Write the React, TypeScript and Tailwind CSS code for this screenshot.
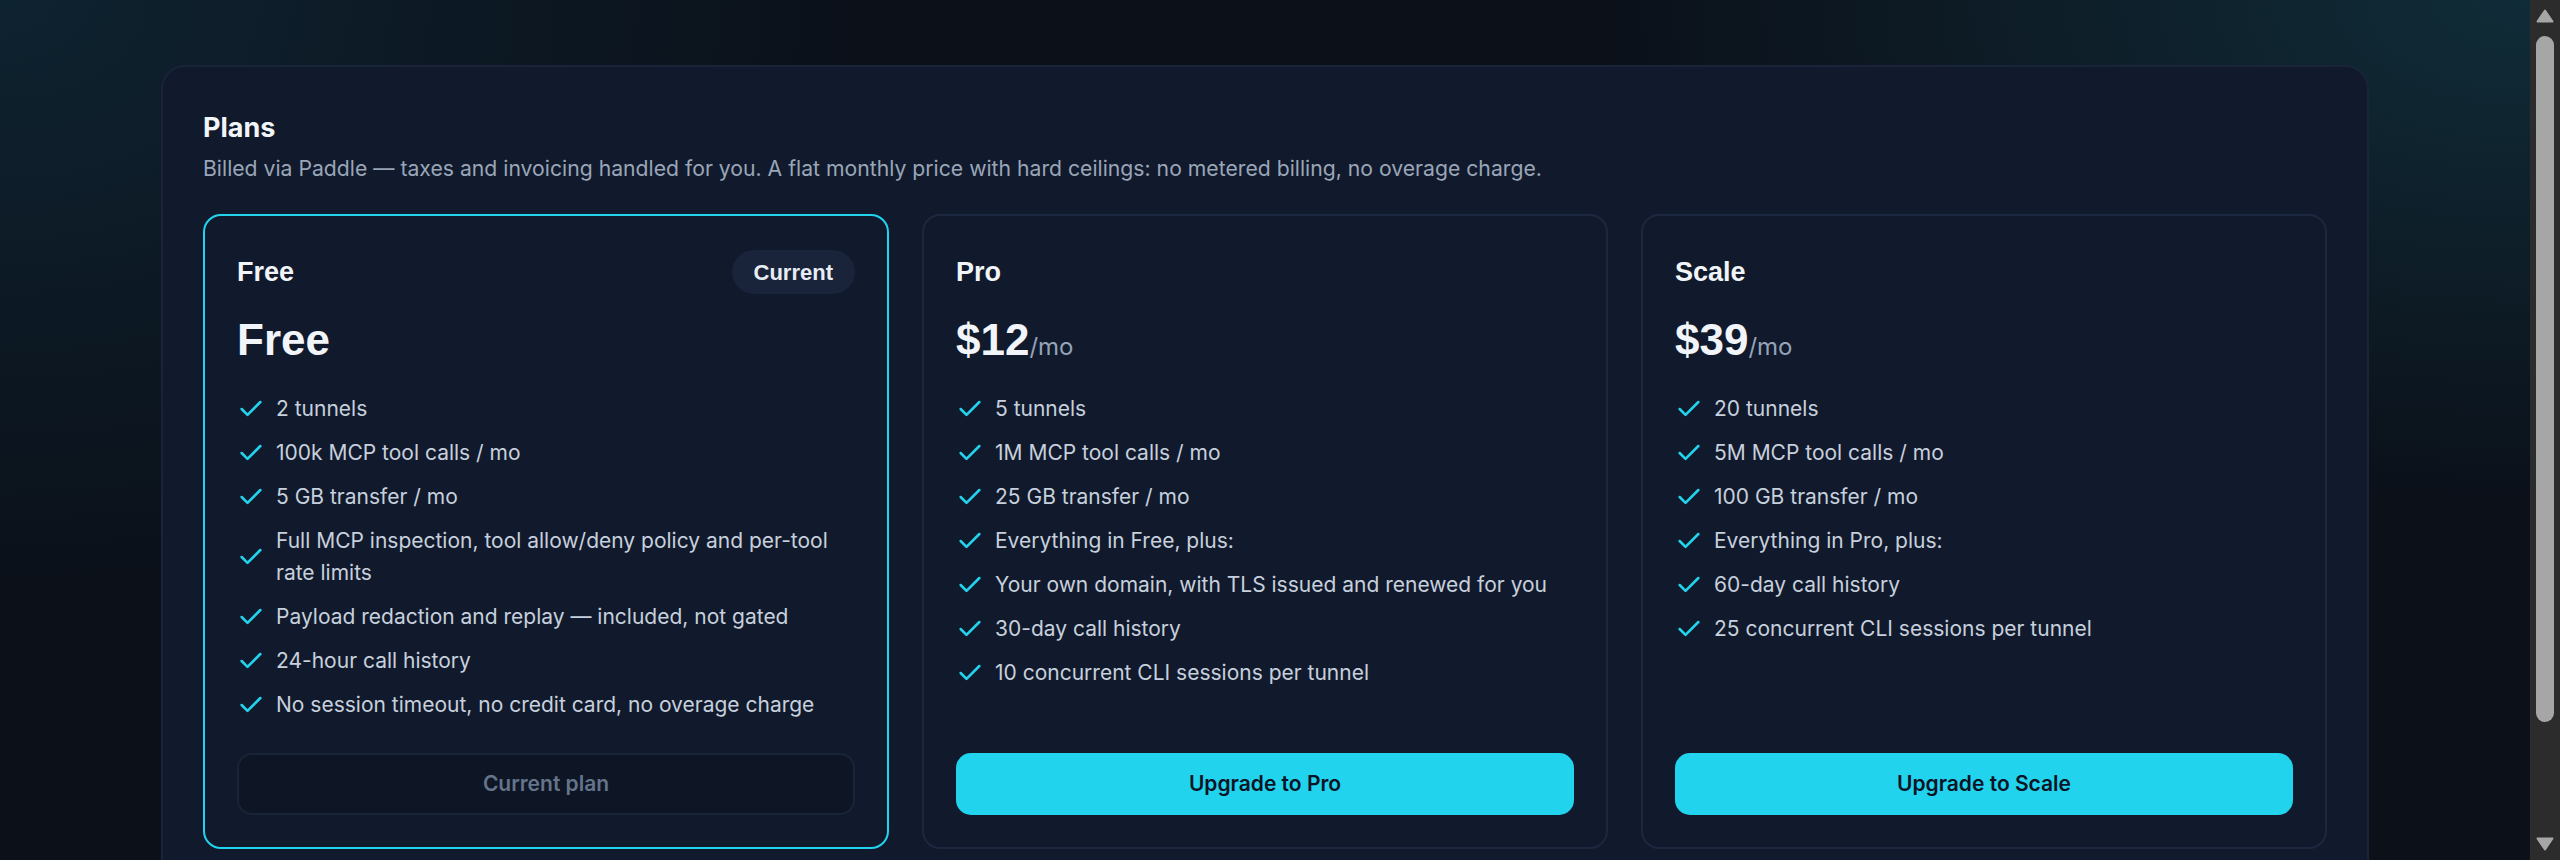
import { Check } from "lucide-react";

type Plan = {
  name: string;
  price: string;
  period?: string;
  features: string[];
  current?: boolean;
  cta: string;
};

const plans: Plan[] = [
  {
    name: "Free",
    price: "Free",
    current: true,
    cta: "Current plan",
    features: [
      "2 tunnels",
      "100k MCP tool calls / mo",
      "5 GB transfer / mo",
      "Full MCP inspection, tool allow/deny policy and per-tool rate limits",
      "Payload redaction and replay — included, not gated",
      "24-hour call history",
      "No session timeout, no credit card, no overage charge",
    ],
  },
  {
    name: "Pro",
    price: "$12",
    period: "/mo",
    cta: "Upgrade to Pro",
    features: [
      "5 tunnels",
      "1M MCP tool calls / mo",
      "25 GB transfer / mo",
      "Everything in Free, plus:",
      "Your own domain, with TLS issued and renewed for you",
      "30-day call history",
      "10 concurrent CLI sessions per tunnel",
    ],
  },
  {
    name: "Scale",
    price: "$39",
    period: "/mo",
    cta: "Upgrade to Scale",
    features: [
      "20 tunnels",
      "5M MCP tool calls / mo",
      "100 GB transfer / mo",
      "Everything in Pro, plus:",
      "60-day call history",
      "25 concurrent CLI sessions per tunnel",
    ],
  },
];

// ─── Plan card ───────────────────────────────────────────────────────────────

function PlanCard({ plan }: { plan: Plan }) {
  return (
    <div
      className={`flex flex-col rounded-[18px] border-2 px-8 pt-[34px] pb-8 ${
        plan.current ? "border-[#22d3ee]" : "border-[#1c2740]"
      }`}
    >
      {/* Header */}
      <div className="flex h-[44px] items-center justify-between">
        <h3 className="font-['Liberation_Sans',Arial,sans-serif] text-[27px] font-bold text-[#f1f5f9]">
          {plan.name}
        </h3>
        {plan.current && (
          <span className="flex h-[44px] items-center rounded-full bg-[#19233a] px-[22px] font-['Liberation_Sans',Arial,sans-serif] text-[22px] font-bold text-[#e8edf4]">
            Current
          </span>
        )}
      </div>

      {/* Price */}
      <div className="mt-[20px] flex items-baseline">
        <span className="font-['Liberation_Sans',Arial,sans-serif] text-[44px] leading-[52px] font-bold text-[#f1f5f9]">
          {plan.price}
        </span>
        {plan.period && <span className="text-[24px] text-[#94a3b8]">{plan.period}</span>}
      </div>

      {/* Features */}
      <ul className="mt-[27px] flex flex-col gap-3">
        {plan.features.map((f) => (
          <li key={f} className="flex items-center gap-[11px]">
            <Check className="shrink-0 text-[#22d3ee]" size={28} strokeWidth={2.2} />
            <span className="text-[21px] leading-[32px] text-[#c7d0dd]">{f}</span>
          </li>
        ))}
      </ul>

      {/* CTA */}
      <div className="mt-auto pt-8">
        {plan.current ? (
          <button className="flex h-[62px] w-full items-center justify-center rounded-[15px] border-2 border-[#1a2438] bg-[#0e1524] text-[21px] font-semibold text-[#64748b]">
            {plan.cta}
          </button>
        ) : (
          <button className="flex h-[62px] w-full items-center justify-center rounded-[15px] bg-[#22d3ee] text-[21px] font-semibold text-[#0b1324]">
            {plan.cta}
          </button>
        )}
      </div>
    </div>
  );
}

// ─── Window scrollbar (classic, drawn) ───────────────────────────────────────

function Scrollbar() {
  return (
    <div className="flex w-[30px] shrink-0 flex-col items-center bg-[#2c2c2c]">
      <div className="flex h-[30px] items-start justify-center pt-[9px]">
        <svg width="18" height="14" viewBox="0 0 18 14">
          <polygon points="9,1.5 16.5,12.5 1.5,12.5" fill="#a6a6a6" stroke="#a6a6a6" strokeWidth="2" strokeLinejoin="round" />
        </svg>
      </div>
      <div className="mt-[6px] h-[686px] w-[18px] rounded-full bg-[#a6a6a6]" />
      <div className="flex-1" />
      <div className="flex h-[30px] items-start justify-center pt-[7px]">
        <svg width="18" height="14" viewBox="0 0 18 14">
          <polygon points="1.5,1.5 16.5,1.5 9,12.5" fill="#a6a6a6" stroke="#a6a6a6" strokeWidth="2" strokeLinejoin="round" />
        </svg>
      </div>
    </div>
  );
}

// ─── Page ─────────────────────────────────────────────────────────────────────

export default function App() {
  return (
    <div className="flex h-screen overflow-hidden font-['Inter',sans-serif]">
      <main className="flex-1 overflow-hidden [background:radial-gradient(ellipse_1200px_820px_at_0%_0%,#0e2330_0%,transparent_72%),radial-gradient(ellipse_1300px_700px_at_100%_0%,#102c38_0%,transparent_72%),#0b1019]">
        <div className="mx-auto w-[2208px] pt-[65px] pb-[96px]">
          <section className="rounded-[24px] border-2 border-[#1a2439] bg-[#111a2c] px-[40px] pt-[43px] pb-[42px]">
            <h2 className="text-[27px] leading-[36px] font-bold text-[#f1f5f9]">Plans</h2>
            <p className="mt-[7px] text-[21.2px] leading-[31px] text-[#9aa6b8]">
              Billed via Paddle — taxes and invoicing handled for you. A flat monthly price with hard
              ceilings: no metered billing, no overage charge.
            </p>

            <div className="mt-[30px] grid grid-cols-3 gap-[33px]">
              {plans.map((p) => (
                <PlanCard key={p.name} plan={p} />
              ))}
            </div>
          </section>
        </div>
      </main>
      <Scrollbar />
    </div>
  );
}
